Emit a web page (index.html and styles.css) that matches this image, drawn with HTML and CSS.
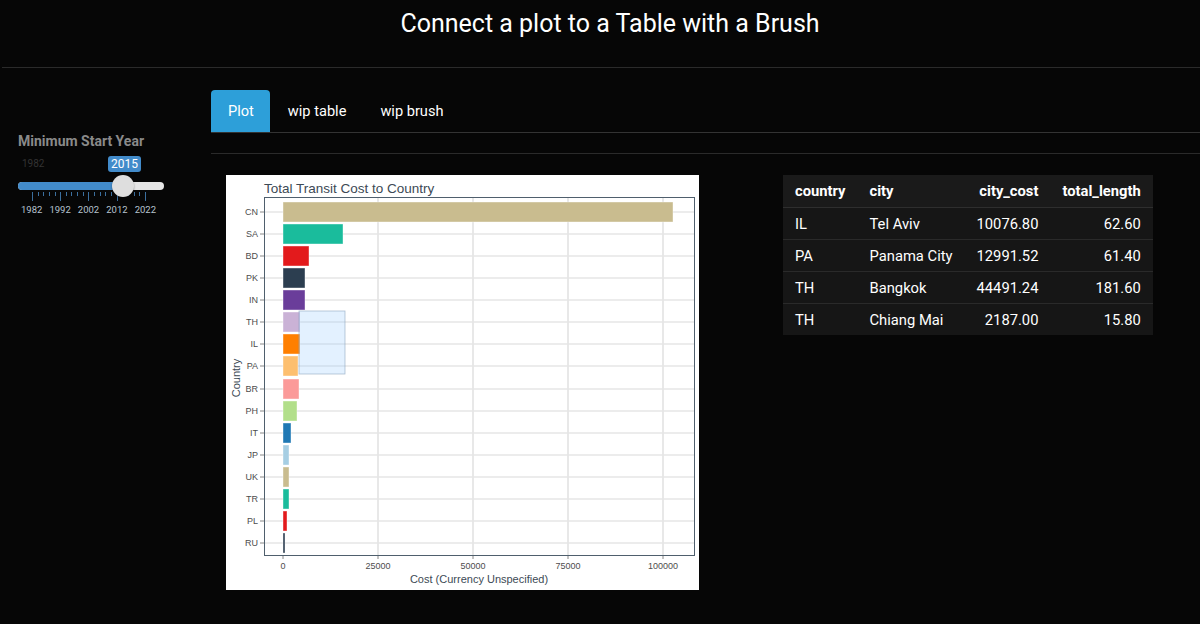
FILE: index.html
```html
<!DOCTYPE html>
<html>
<head>
<meta charset="utf-8">
<link rel="stylesheet" href="styles.css">
</head>
<body>
<div class="page">
  <h1 class="title">Connect a plot to a Table with a Brush</h1>
  <hr class="rule">
  <div class="layout">
    <aside class="sidebar">
      <label class="ctl-label">Minimum Start Year</label>
      <div class="slider">
        <div class="slider-top">
          <span class="min">1982</span>
          <span class="bubble">2015</span>
        </div>
        <div class="track">
          <div class="fill"></div>
          <div class="handle"></div>
        </div>
        <div class="ticks">
          <span class="tk major"></span><span class="tk"></span><span class="tk"></span><span class="tk"></span><span class="tk"></span><span class="tk major"></span><span class="tk"></span><span class="tk"></span><span class="tk"></span><span class="tk"></span><span class="tk major"></span><span class="tk"></span><span class="tk"></span><span class="tk"></span><span class="tk"></span><span class="tk major"></span><span class="tk"></span><span class="tk"></span><span class="tk"></span><span class="tk"></span><span class="tk major"></span>
        </div>
        <div class="tick-labels">
          <span>1982</span><span>1992</span><span>2002</span><span>2012</span><span>2022</span>
        </div>
      </div>
    </aside>
    <main class="main">
      <nav class="tabs">
        <a class="tab active">Plot</a>
        <a class="tab">wip table</a>
        <a class="tab">wip brush</a>
      </nav>
      <hr class="tab-rule">
      <div class="content">
        <div class="plot">
          <svg width="473" height="415" viewBox="0 0 473 415" xmlns="http://www.w3.org/2000/svg">
            <rect x="0" y="0" width="473" height="415" fill="#fff"/>
            <text x="38" y="18" font-family="Liberation Sans, Arial, sans-serif" font-size="13.5" fill="#3d4a55">Total Transit Cost to Country</text>
            <g stroke="#e3e3e3" stroke-width="1.6">
              <line x1="152" y1="22" x2="152" y2="380"/>
              <line x1="247" y1="22" x2="247" y2="380"/>
              <line x1="342" y1="22" x2="342" y2="380"/>
              <line x1="437" y1="22" x2="437" y2="380"/>
            </g>
            <g stroke="#e6e6e6" stroke-width="1.6">
              <line x1="38" y1="37" x2="468" y2="37"/>
              <line x1="38" y1="59" x2="468" y2="59"/>
              <line x1="38" y1="81" x2="468" y2="81"/>
              <line x1="38" y1="103" x2="468" y2="103"/>
              <line x1="38" y1="125" x2="468" y2="125"/>
              <line x1="38" y1="147" x2="468" y2="147"/>
              <line x1="38" y1="169" x2="468" y2="169"/>
              <line x1="38" y1="191" x2="468" y2="191"/>
              <line x1="38" y1="214" x2="468" y2="214"/>
              <line x1="38" y1="236" x2="468" y2="236"/>
              <line x1="38" y1="258" x2="468" y2="258"/>
              <line x1="38" y1="280" x2="468" y2="280"/>
              <line x1="38" y1="302" x2="468" y2="302"/>
              <line x1="38" y1="324" x2="468" y2="324"/>
              <line x1="38" y1="346" x2="468" y2="346"/>
              <line x1="38" y1="368" x2="468" y2="368"/>
            </g>
            <g stroke="#fff" stroke-opacity="0.5" stroke-width="0.8">
              <rect x="57" y="27" width="390" height="20" fill="#c9bc8f"/>
              <rect x="57" y="49" width="60" height="20" fill="#1abc9c"/>
              <rect x="57" y="71" width="26" height="20" fill="#e31a1c"/>
              <rect x="57" y="93" width="22" height="20" fill="#2c3e50"/>
              <rect x="57" y="115" width="22" height="20" fill="#6a3d9a"/>
              <rect x="57" y="137" width="17" height="20" fill="#cab2d6"/>
              <rect x="57" y="159" width="17" height="20" fill="#ff7f00"/>
              <rect x="57" y="181" width="15" height="20" fill="#fdbf6f"/>
              <rect x="57" y="204" width="16" height="20" fill="#fb9a99"/>
              <rect x="57" y="226" width="14" height="20" fill="#b2df8a"/>
              <rect x="57" y="248" width="8" height="20" fill="#1f78b4"/>
              <rect x="57" y="270" width="6" height="20" fill="#a6cee3"/>
              <rect x="57" y="292" width="6" height="20" fill="#c9bc8f"/>
              <rect x="57" y="314" width="6" height="20" fill="#1abc9c"/>
              <rect x="57" y="336" width="4" height="20" fill="#e31a1c"/>
              <rect x="57" y="358" width="2" height="20" fill="#2c3e50"/>
            </g>
            <rect x="73" y="136" width="46" height="63" fill="#99ccff" fill-opacity="0.28" stroke="#8aa4bd" stroke-opacity="0.7" stroke-width="0.8"/>
            <rect x="38.5" y="22.5" width="430" height="358" fill="none" stroke="#4f5f6d" stroke-width="1"/>
            <g stroke="#888" stroke-width="1">
              <line x1="34" y1="37" x2="38" y2="37"/><line x1="34" y1="59" x2="38" y2="59"/><line x1="34" y1="81" x2="38" y2="81"/><line x1="34" y1="103" x2="38" y2="103"/><line x1="34" y1="125" x2="38" y2="125"/><line x1="34" y1="147" x2="38" y2="147"/><line x1="34" y1="169" x2="38" y2="169"/><line x1="34" y1="191" x2="38" y2="191"/><line x1="34" y1="214" x2="38" y2="214"/><line x1="34" y1="236" x2="38" y2="236"/><line x1="34" y1="258" x2="38" y2="258"/><line x1="34" y1="280" x2="38" y2="280"/><line x1="34" y1="302" x2="38" y2="302"/><line x1="34" y1="324" x2="38" y2="324"/><line x1="34" y1="346" x2="38" y2="346"/><line x1="34" y1="368" x2="38" y2="368"/>
              <line x1="57" y1="381" x2="57" y2="384"/><line x1="152" y1="381" x2="152" y2="384"/><line x1="247" y1="381" x2="247" y2="384"/><line x1="342" y1="381" x2="342" y2="384"/><line x1="437" y1="381" x2="437" y2="384"/>
            </g>
            <g font-family="Liberation Sans, Arial, sans-serif" font-size="9" fill="#4d4d4d" text-anchor="end">
              <text x="32" y="40">CN</text><text x="32" y="62">SA</text><text x="32" y="84">BD</text><text x="32" y="106">PK</text><text x="32" y="128">IN</text><text x="32" y="150">TH</text><text x="32" y="172">IL</text><text x="32" y="194">PA</text><text x="32" y="217">BR</text><text x="32" y="239">PH</text><text x="32" y="261">IT</text><text x="32" y="283">JP</text><text x="32" y="305">UK</text><text x="32" y="327">TR</text><text x="32" y="349">PL</text><text x="32" y="371">RU</text>
            </g>
            <g font-family="Liberation Sans, Arial, sans-serif" font-size="9" fill="#4d4d4d" text-anchor="middle">
              <text x="57" y="394">0</text><text x="152" y="394">25000</text><text x="247" y="394">50000</text><text x="342" y="394">75000</text><text x="437" y="394">100000</text>
            </g>
            <text x="253" y="408" text-anchor="middle" font-family="Liberation Sans, Arial, sans-serif" font-size="11" fill="#3d4a55">Cost (Currency Unspecified)</text>
            <text transform="translate(14 203) rotate(-90)" text-anchor="middle" font-family="Liberation Sans, Arial, sans-serif" font-size="11" fill="#3d4a55">Country</text>
          </svg>
        </div>
        <table class="data">
          <thead>
            <tr><th>country</th><th>city</th><th class="num">city_cost</th><th class="num">total_length</th></tr>
          </thead>
          <tbody>
            <tr><td>IL</td><td>Tel Aviv</td><td class="num">10076.80</td><td class="num">62.60</td></tr>
            <tr><td>PA</td><td>Panama City</td><td class="num">12991.52</td><td class="num">61.40</td></tr>
            <tr><td>TH</td><td>Bangkok</td><td class="num">44491.24</td><td class="num">181.60</td></tr>
            <tr><td>TH</td><td>Chiang Mai</td><td class="num">2187.00</td><td class="num">15.80</td></tr>
          </tbody>
        </table>
      </div>
    </main>
  </div>
</div>
</body>
</html>
```

FILE: styles.css
```css
html, body {
  margin: 0;
  padding: 0;
  background: #060606;
  color: #fff;
  font-family: Roboto, "Liberation Sans", Arial, sans-serif;
  font-size: 14px;
}
.page {
  width: 1200px;
  height: 624px;
  overflow: hidden;
}
.title {
  margin: 0;
  padding: 9px 0 0 20px;
  height: 58px;
  font-size: 25px;
  font-weight: 400;
  line-height: 30px;
  text-align: center;
  color: #fff;
}
.rule {
  margin: 0 0 0 2px;
  border: 0;
  border-top: 1px solid #2a2a2a;
  height: 0;
}
.layout {
  display: flex;
  padding-top: 22px;
}
.sidebar {
  width: 175px;
  padding: 42px 0 0 18px;
  flex: none;
}
.ctl-label {
  display: block;
  font-weight: 700;
  font-size: 14px;
  color: #8a8a8a;
  line-height: 18px;
}
.slider {
  width: 146px;
  margin-top: 6px;
}
.slider-top {
  position: relative;
  height: 18px;
}
.min {
  position: absolute;
  left: 4px;
  top: 2px;
  font-size: 10px;
  color: #333;
}
.bubble {
  position: absolute;
  left: 90px;
  top: 0;
  background: #428bca;
  color: #fff;
  font-size: 12px;
  line-height: 16px;
  padding: 0 3px;
  border-radius: 3px;
}
.track {
  position: relative;
  margin-top: 8px;
  height: 8px;
  background: #e6e6e6;
  border-radius: 4px;
}
.fill {
  width: 105px;
  height: 8px;
  background: #428bca;
  border-radius: 4px 0 0 4px;
}
.handle {
  position: absolute;
  left: 94px;
  top: -7px;
  width: 22px;
  height: 22px;
  border-radius: 50%;
  background: #dedede;
  box-shadow: 0 1px 2px rgba(0,0,0,0.4);
}
.ticks {
  display: flex;
  justify-content: space-between;
  align-items: flex-start;
  margin: 2px 18px 0 14px;
  height: 10px;
}
.tk {
  width: 1px;
  height: 4px;
  background: #3b6f9e;
}
.tk.major {
  height: 9px;
}
.tick-labels {
  display: flex;
  justify-content: space-between;
  margin: 2px 8px 0 3px;
  font-size: 9.5px;
  line-height: 12px;
  color: #b7c3d0;
}
.main {
  flex: 1;
  min-width: 0;
}
.tabs {
  display: flex;
  margin-left: 18px;
  border-bottom: 1px solid #333;
  height: 42px;
}
.tab {
  display: block;
  padding: 0 16px;
  margin-right: 2px;
  line-height: 42px;
  font-size: 14.6px;
  color: #fff;
  border-radius: 4px 4px 0 0;
}
.tab.active {
  background: #2d9fd9;
  padding: 0 16px 0 17px;
}
.tab-rule {
  margin: 20px 0 0 18px;
  border: 0;
  border-top: 1px solid #2a2a2a;
  height: 0;
}
.content {
  display: flex;
  align-items: flex-start;
  padding: 21px 0 0 33px;
  gap: 84px;
}
.plot {
  width: 473px;
  height: 415px;
  flex: none;
}
.plot svg {
  display: block;
}
.data {
  border-collapse: collapse;
  background: #1a1a1a;
  font-size: 14.75px;
  color: #fff;
}
.data th {
  box-sizing: border-box;
  font-weight: 700;
  text-align: left;
  height: 32px;
  padding: 1px 12px 0;
  border-bottom: 1px solid #2e2e2e;
  background: #1a1a1a;
}
.data td {
  box-sizing: border-box;
  height: 32px;
  padding: 1px 12px 0;
  border-bottom: 1px solid #2a2a2a;
  background: #161616;
}
.data tr:last-child td {
  border-bottom: 0;
}
.data .num {
  text-align: right;
}
```
